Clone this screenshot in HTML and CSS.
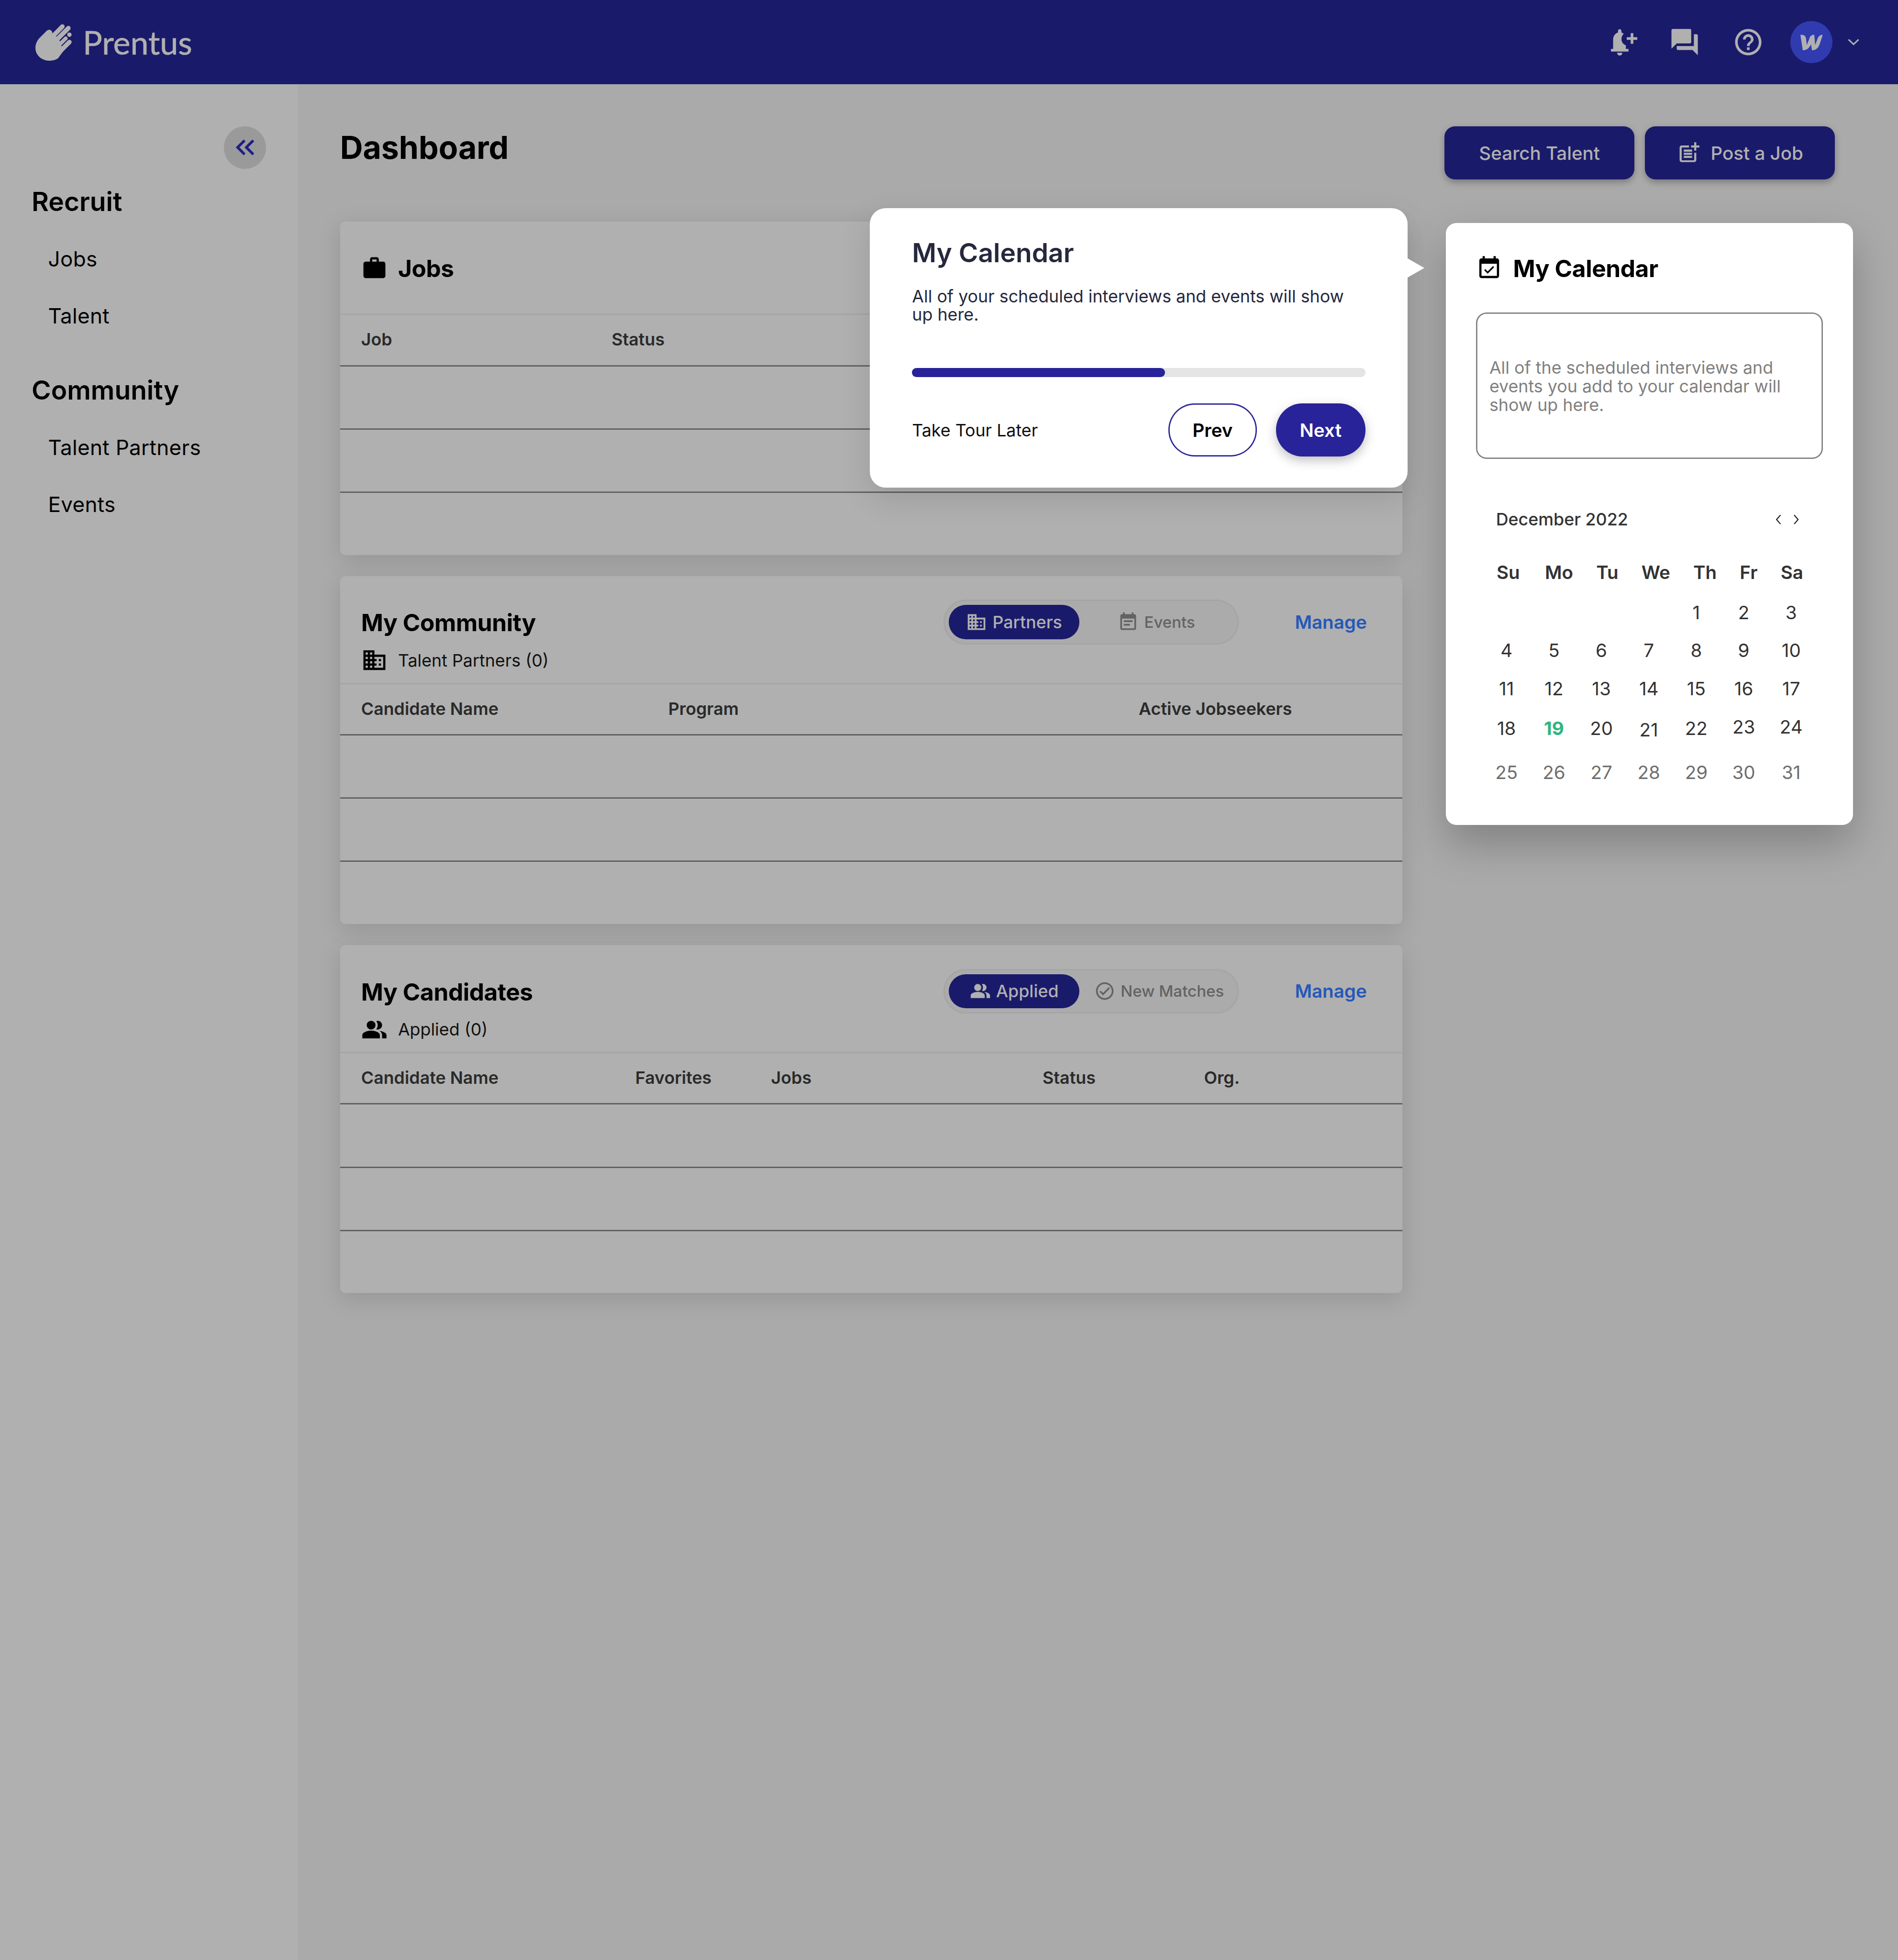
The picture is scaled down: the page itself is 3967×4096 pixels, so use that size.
FILE: index.html
```html
<!DOCTYPE html>
<html lang="en">
<head>
<meta charset="utf-8">
<title>Prentus Dashboard</title>
<link rel="stylesheet" href="styles.css">
</head>
<body>
<div class="app">
  <header class="topbar">
    <div class="logo">
      <svg class="logo-hand" viewBox="0 0 300 300"><path class="hand-palm" d="M130 278C75 278 33 240 33 190C33 165 42 145 58 125L108 75C118 65 133 63 142 73C150 82 150 92 148 100L176 112L200 143L213 183L240 190L187 262C170 273 150 278 130 278z"/><path class="hand-finger" d="M150 112L217 44M188 125L258 55"/><path class="hand-finger-s" d="M205 160L240 125"/><path class="hand-finger" d="M205 210L265 150"/><circle class="hand-palm" cx="265" cy="100" r="15"/></svg>
      <span class="logo-name">Prentus</span>
    </div>
    <div class="top-actions">
      <svg class="ico-bell" viewBox="0 0 24 24"><path d="M8 0c1 0 1.6.9 1.6 1.9v1.2c.8.2 1.5.6 2 1-1.3 1.4-2 3-2 4.9 0 3 2 5 4 5.6V18H16v2.4H0V18h2V9.6C2 6.4 3.8 3.9 6.4 3.1V1.9C6.4.9 7 0 8 0zM5.6 21.5h4.8c0 1.4-1 2.5-2.4 2.5s-2.4-1.1-2.4-2.5zM18 3.6h2.4v3.7H24v2.4h-3.6v3.6H18V9.700h-3.600V7.300H18z"/></svg>
      <svg class="ico-top" viewBox="0 0 24 24"><path d="M21 6h-2v9H6v2c0 .55.45 1 1 1h11l4 4V7c0-.55-.45-1-1-1zm-4 6V3c0-.55-.45-1-1-1H3c-.55 0-1 .45-1 1v14l4-4h10c.55 0 1-.45 1-1z"/></svg>
      <svg class="ico-top" viewBox="0 0 24 24"><path d="M11 18h2v-2h-2v2zm1-16C6.48 2 2 6.48 2 12s4.48 10 10 10 10-4.48 10-10S17.52 2 12 2zm0 18c-4.41 0-8-3.59-8-8s3.59-8 8-8 8 3.59 8 8-3.59 8-8 8zm0-14c-2.21 0-4 1.790-4 4h2c0-1.100.9-2 2-2s2 .9 2 2c0 2-3 1.750-3 5h2c0-2.250 3-2.500 3-5 0-2.210-1.790-4-4-4z"/></svg>
      <div class="avatar"><svg viewBox="0 0 17 12"><path d="M0 .3C2.500.1 3.900.9 4.200 2.900L4.900 8L7 2.600C7.600 1 8.800.2 10.500.2L11.200 8L12.900 3.600C13.700 1.500 15 .3 17 .2L14.600 7.400C13.500 10.400 11.600 12 8.800 12L8.100 7.600L6.600 9.800C5.400 11.200 3.900 12 1.800 12z"/></svg></div>
      <svg class="caret" viewBox="0 0 9 5"><path d="M.6.6L4.400 4.200L8.200.6"/></svg>
    </div>
  </header>

  <div class="layout">
    <aside class="sidebar">
      <div class="collapse-row">
        <button class="collapse"><svg viewBox="0 0 24 24"><path d="M17.590 18 19 16.590 14.420 12 19 7.410 17.590 6l-6 6zM11 18l1.410-1.410L7.830 12l4.580-4.590L11 6l-6 6z"/></svg></button>
      </div>
      <h2 class="nav-title nav-first">Recruit</h2>
      <nav class="nav-list">
        <a class="nav-item">Jobs</a>
        <a class="nav-item">Talent</a>
      </nav>
      <h2 class="nav-title nav-second">Community</h2>
      <nav class="nav-list">
        <a class="nav-item">Talent Partners</a>
        <a class="nav-item">Events</a>
      </nav>
    </aside>

    <main class="main">
      <div class="title-row">
        <h1 class="page-title">Dashboard</h1>
        <div class="title-actions">
          <button class="btn">Search Talent</button>
          <button class="btn"><svg class="btn-ico" viewBox="0 0 24 24"><path d="M17 19.220H5V7h7V5H5c-1.100 0-2 .9-2 2v12c0 1.100.9 2 2 2h12c1.100 0 2-.9 2-2v-7h-2v7.220zM19 2h-2v3h-3c.01.01 0 2 0 2h3v2.990c.01.01 2 0 2 0V7h3V5h-3V2zM7 9h8v2H7zm0 3v2h8v-2h-3zm0 3h8v2H7z"/></svg>Post a Job</button>
        </div>
      </div>

      <div class="content">
        <div class="cards">
          <section class="card">
            <div class="card-head card-head-single">
              <svg class="ico20" viewBox="0 0 24 24"><path d="M20 6h-4V4c0-1.110-.89-2-2-2h-4c-1.110 0-2 .89-2 2v2H4c-1.110 0-1.990.89-1.990 2L2 19c0 1.110.89 2 2 2h16c1.110 0 2-.89 2-2V8c0-1.110-.89-2-2-2zm-6 0h-4V4h4v2z"/></svg>
              <h3 class="card-title">Jobs</h3>
            </div>
            <div class="thead thead-jobs"><span>Job</span><span>Status</span></div>
            <div class="row"></div><div class="row"></div><div class="row row-last"></div>
          </section>

          <section class="card">
            <div class="card-head">
              <div class="head-top">
                <h3 class="card-title grow">My Community</h3>
                <div class="pill">
                  <span class="seg seg-on"><svg class="ico16" viewBox="0 0 24 24"><path d="M12 7V3H2v18h20V7H12zM6 19H4v-2h2v2zm0-4H4v-2h2v2zm0-4H4V9h2v2zm0-4H4V5h2v2zm4 12H8v-2h2v2zm0-4H8v-2h2v2zm0-4H8V9h2v2zm0-4H8V5h2v2zm10 12h-8v-2h2v-2h-2v-2h2v-2h-2V9h8v10zm-2-8h-2v2h2v-2zm0 4h-2v2h2v-2z"/></svg>Partners</span>
                  <span class="seg"><svg class="ico16" viewBox="0 0 24 24"><path d="M17 10H7v2h10v-2zm2-7h-1V1h-2v2H8V1H6v2H5c-1.110 0-1.990.9-1.990 2L3 19c0 1.100.89 2 2 2h14c1.100 0 2-.9 2-2V5c0-1.100-.9-2-2-2zm0 16H5V8h14v11zm-5-5H7v2h7v-2z"/></svg>Events</span>
                </div>
                <a class="manage">Manage</a>
              </div>
              <div class="head-sub"><svg class="ico20" viewBox="0 0 24 24"><path d="M12 7V3H2v18h20V7H12zM6 19H4v-2h2v2zm0-4H4v-2h2v2zm0-4H4V9h2v2zm0-4H4V5h2v2zm4 12H8v-2h2v2zm0-4H8v-2h2v2zm0-4H8V9h2v2zm0-4H8V5h2v2zm10 12h-8v-2h2v-2h-2v-2h2v-2h-2V9h8v10zm-2-8h-2v2h2v-2zm0 4h-2v2h2v-2z"/></svg>Talent Partners (0)</div>
            </div>
            <div class="thead thead-community"><span>Candidate Name</span><span>Program</span><span>Active Jobseekers</span></div>
            <div class="row"></div><div class="row"></div><div class="row row-last"></div>
          </section>

          <section class="card">
            <div class="card-head">
              <div class="head-top">
                <h3 class="card-title grow">My Candidates</h3>
                <div class="pill">
                  <span class="seg seg-on"><svg class="ico16" viewBox="0 0 24 24"><path d="M16.670 13.130C18.040 14.060 19 15.320 19 17v3h4v-3c0-2.180-3.570-3.470-6.330-3.870z"/><circle cx="9" cy="8" r="4"/><path d="M15 12c2.210 0 4-1.790 4-4s-1.790-4-4-4c-.47 0-.91.1-1.330.24C14.500 5.270 15 6.580 15 8s-.5 2.730-1.330 3.760c.42.14.86.24 1.330.24zM9 13c-2.670 0-8 1.340-8 4v3h16v-3c0-2.660-5.330-4-8-4z"/></svg>Applied</span>
                  <span class="seg seg-shift"><svg class="ico16" viewBox="0 0 24 24"><path d="M12 2C6.480 2 2 6.480 2 12s4.480 10 10 10 10-4.480 10-10S17.520 2 12 2zm0 18c-4.410 0-8-3.590-8-8s3.590-8 8-8 8 3.590 8 8-3.590 8-8 8zm4.590-12.420L10 14.170l-2.590-2.580L6 13l4 4 8-8z"/></svg>New Matches</span>
                </div>
                <a class="manage">Manage</a>
              </div>
              <div class="head-sub"><svg class="ico20" viewBox="0 0 24 24"><path d="M16.670 13.130C18.040 14.060 19 15.320 19 17v3h4v-3c0-2.180-3.570-3.470-6.330-3.870z"/><circle cx="9" cy="8" r="4"/><path d="M15 12c2.210 0 4-1.790 4-4s-1.790-4-4-4c-.47 0-.91.1-1.330.24C14.500 5.270 15 6.580 15 8s-.5 2.730-1.330 3.760c.42.14.86.24 1.330.24zM9 13c-2.670 0-8 1.340-8 4v3h16v-3c0-2.660-5.330-4-8-4z"/></svg>Applied (0)</div>
            </div>
            <div class="thead thead-candidates"><span>Candidate Name</span><span>Favorites</span><span>Jobs</span><span>Status</span><span>Org.</span></div>
            <div class="row"></div><div class="row"></div><div class="row row-last"></div>
          </section>
        </div>

        <section class="calendar">
          <div class="cal-head">
            <svg class="ico20" viewBox="0 0 24 24"><path d="M16.530 11.060L15.470 10l-4.880 4.880-2.120-2.120-1.060 1.060L10.590 17l5.940-5.940zM19 3h-1V1h-2v2H8V1H6v2H5c-1.110 0-1.990.9-1.990 2L3 19c0 1.100.89 2 2 2h14c1.100 0 2-.9 2-2V5c0-1.100-.9-2-2-2zm0 16H5V8h14v11z"/></svg>
            <h3 class="card-title">My Calendar</h3>
          </div>
          <div class="cal-empty"><p>All of the scheduled interviews and events you add to your calendar will show up here.</p></div>
          <div class="cal-month">
            <span>December 2022</span>
            <span class="cal-nav">
              <svg viewBox="0 0 5 9"><path d="M4.200.7L.9 4.500L4.200 8.300"/></svg>
              <svg viewBox="0 0 5 9"><path d="M.8.7L4.100 4.500L.8 8.300"/></svg>
            </span>
          </div>
          <div class="cal-week"><span>Su</span><span class="cal-mo">Mo</span><span>Tu</span><span>We</span><span>Th</span><span>Fr</span><span>Sa</span></div>
          <div class="cal-grid">
            <span></span><span></span><span></span><span></span><span>1</span><span>2</span><span>3</span>
            <span>4</span><span>5</span><span>6</span><span>7</span><span>8</span><span>9</span><span>10</span>
            <span>11</span><span>12</span><span>13</span><span>14</span><span>15</span><span>16</span><span>17</span>
            <span>18</span><span class="today">19</span><span>20</span><span class="low">21</span><span>22</span><span class="high">23</span><span class="high">24</span>
            <span class="next">25</span><span class="next">26</span><span class="next">27</span><span class="next">28</span><span class="next">29</span><span class="next">30</span><span class="next">31</span>
          </div>
        </section>

        <aside class="tour">
          <h4 class="tour-title">My Calendar</h4>
          <p class="tour-text">All of your scheduled interviews and events will show up here.</p>
          <div class="progress"><div class="progress-fill"></div></div>
          <div class="tour-foot">
            <span class="tour-later">Take Tour Later</span>
            <div class="tour-btns">
              <button class="tour-btn tour-prev">Prev</button>
              <button class="tour-btn tour-next">Next</button>
            </div>
          </div>
        </aside>
      </div>
    </main>
  </div>
</div>
</body>
</html>
```

FILE: styles.css
```css
html, body { margin: 0; padding: 0; background: #aaaaaa; overflow: hidden; }
body { font-family: "Inter", "Liberation Sans", sans-serif; color: #000; }
h1, h2, h3, h4, p { margin: 0; }
button { font-family: inherit; border: 0; padding: 0; cursor: pointer; }
svg { display: block; flex: none; }

.app { zoom: 2.7548; width: 1440px; height: 1486.800px; display: flex; flex-direction: column; background: #aaaaaa; }

/* top bar */
.topbar { height: 64px; flex: none; background: #1a1a6b; display: flex; align-items: center; justify-content: space-between; padding: 0 29px 0 23.300px; }
.logo { display: flex; align-items: center; gap: 6.200px; }
.logo-hand { width: 33.300px; height: 33.300px; }
.hand-palm { fill: #b0b0b0; }
.hand-finger { fill: none; stroke: #b0b0b0; stroke-width: 31; stroke-linecap: round; }
.hand-finger-s { fill: none; stroke: #b0b0b0; stroke-width: 26; stroke-linecap: round; }
.logo-name { font-family: "Lato", sans-serif; font-size: 24.700px; font-weight: 400; color: #b0b0b0; line-height: 32px; -webkit-text-stroke: 0.25px #b0b0b0; }
.top-actions { display: flex; align-items: center; }
.ico-bell { width: 20px; height: 20px; fill: #b0b0b0; margin-right: 24px; }
.ico-top { width: 24px; height: 24px; fill: #b0b0b0; margin-right: 24px; }
.ico-top + .avatar { margin-left: -4px; }
.avatar { width: 32px; height: 32px; border-radius: 50%; background: #303bb0; display: flex; align-items: center; justify-content: center; margin-right: 11.700px; }
.avatar svg { width: 17px; height: 12px; fill: #b0b0b0; }
.caret { width: 9px; height: 5px; fill: none; stroke: #b0b0b0; stroke-width: 1.100; }

.layout { flex: 1; display: flex; }

/* sidebar */
.sidebar { width: 226px; flex: none; background: #b0b0b0; padding-top: 32px; box-sizing: border-box; }
.collapse-row { display: flex; justify-content: flex-end; padding-right: 24px; }
.collapse { width: 32px; height: 32px; border-radius: 50%; background: #9a9a9a; display: flex; align-items: center; justify-content: center; }
.collapse svg { width: 24px; height: 24px; fill: #1f1d85; }
.nav-title { font-size: 20px; line-height: 24px; font-weight: 600; padding-left: 24px; }
.nav-first { margin-top: 13px; }
.nav-second { margin-top: 32.500px; }
.nav-list { display: flex; flex-direction: column; gap: 19px; margin-top: 19.500px; padding-left: 36.500px; }
.nav-item { font-size: 16px; line-height: 24px; color: #000; letter-spacing: 0.1px; }

/* main */
.main { flex: 1; padding: 32px 34px 0 32px; }
.title-row { display: flex; justify-content: space-between; align-items: flex-start; margin: 0 14px 32px 0; }
.page-title { font-size: 24px; line-height: 32px; font-weight: 700; }
.title-actions { display: flex; gap: 8px; }
.btn { width: 144px; height: 40px; border-radius: 8px; background: #1a1a6b; color: #b0b0b0; font-size: 14px; font-weight: 500; display: flex; align-items: center; justify-content: center; gap: 7px; box-shadow: 0 2px 5px rgba(0, 0, 0, 0.28); }
.btn-ico { width: 19px; height: 19px; fill: #b0b0b0; }

.content { position: relative; display: flex; gap: 33px; align-items: flex-start; }
.cards { width: 806px; flex: none; display: flex; flex-direction: column; gap: 16px; }

.card { background: #b0b0b0; border-radius: 4px; box-shadow: 0 4px 18px rgba(0, 0, 0, 0.13); }
.card-head { height: 82px; box-sizing: border-box; box-shadow: inset 0 -1px 0 #a5a5a5; padding: 0 27px 0 16px; }
.card-head-single { height: 71px; display: flex; align-items: center; gap: 8px; }
.head-top { display: flex; align-items: center; padding-top: 18px; }
.grow { flex: 1; padding-top: 1px; }
.card-title { font-size: 18px; line-height: 24px; font-weight: 700; letter-spacing: -0.15px; }
.ico20 { width: 20px; height: 20px; fill: #000; }
.ico16 { width: 16px; height: 16px; fill: currentColor; }
.head-sub { display: flex; align-items: center; gap: 8px; height: 20px; margin-top: 2px; font-size: 13px; color: #111; }

.pill { width: 224px; height: 34px; box-sizing: border-box; box-shadow: inset 0 0 0 1px #a5a5a5; border-radius: 17px; background: #ababab; padding: 4px; display: flex; }
.seg { flex: 1; display: flex; align-items: center; justify-content: center; gap: 4px; font-size: 12px; font-weight: 500; color: #636363; white-space: nowrap; }
.seg-on { flex: none; width: 99px; height: 26px; border-radius: 13px; background: #1a1a6b; color: #b0b0b0; font-size: 13px; }
.seg-shift { padding-left: 4px; }
.manage { margin-left: 42.500px; font-size: 14px; font-weight: 600; color: #2558b8; }

.thead { height: 39px; box-sizing: border-box; box-shadow: inset 0 -1px 0 #5c5c5c; padding: 0 0 2px 16px; display: grid; align-items: center; font-size: 13px; font-weight: 600; color: #2a2a2a; }
.thead-jobs { grid-template-columns: 190px 1fr; }
.thead-community { grid-template-columns: 233px 357px 1fr; }
.thead-candidates { grid-template-columns: 208px 103px 206px 122.500px 1fr; }
.row { height: 48px; box-sizing: border-box; box-shadow: inset 0 -1px 0 #5c5c5c; }
.row-last { height: 47px; box-shadow: none; }

/* calendar */
.calendar { width: 309px; flex: none; margin-top: 1px; box-sizing: border-box; background: #fff; border-radius: 8px; padding: 24.500px 23px 21.700px 23px; box-shadow: 0 14px 32px rgba(0, 0, 0, 0.24); position: relative; }
.cal-head { display: flex; align-items: center; gap: 8px; height: 20px; }
.cal-empty { margin-top: 23.500px; height: 111px; box-sizing: border-box; box-shadow: inset 0 0 0 1px #808080; border-radius: 8px; padding: 1.500px 10px 0; display: flex; align-items: center; }
.cal-empty p { font-size: 13px; line-height: 14.200px; color: #808080; }
.cal-month { display: flex; justify-content: space-between; align-items: center; height: 20px; margin-top: 36px; padding: 0 18px 0 15px; font-size: 13px; font-weight: 500; color: #333; }
.cal-nav { display: flex; gap: 9px; }
.cal-nav svg { width: 4.500px; height: 8.500px; fill: none; stroke: #222; stroke-width: 0.900; }
.cal-week { display: flex; gap: 17.500px; height: 20px; align-items: center; margin-top: 20px; padding-left: 15.500px; font-size: 14px; font-weight: 600; color: #333; }
.cal-mo { margin-left: 1.500px; }
.cal-grid { display: grid; grid-template-columns: repeat(7, 36px); grid-template-rows: 29px 29px 29px 31px 36px; margin: 6px 0 0 5px; font-size: 14px; color: #333; }
.cal-grid span { display: flex; align-items: center; justify-content: center; box-sizing: border-box; }
.cal-grid .today { color: #2db67d; font-weight: 700; }
.cal-grid .low { padding-top: 2px; }
.cal-grid .high { padding-bottom: 2px; }
.cal-grid .next { color: #6e6e6e; }

/* tour popover */
.tour { position: absolute; left: 402px; top: -10px; width: 408px; height: 212px; box-sizing: border-box; background: #fff; border-radius: 12px; padding: 20px 32px 0; box-shadow: 0 8px 24px rgba(0, 0, 0, 0.12); color: #25283d; z-index: 2; }
.tour::after { content: ""; position: absolute; left: 100%; top: 38px; border-style: solid; border-width: 7.500px 0 7.500px 13px; border-color: transparent transparent transparent #fff; }
.tour-title { font-size: 20px; line-height: 28px; font-weight: 600; }
.tour-text { margin-top: 11.700px; font-size: 13px; line-height: 14px; }
.progress { margin-top: 33.500px; height: 7px; border-radius: 4px; background: #e4e4e4; }
.progress-fill { width: 55.800%; height: 7px; border-radius: 4px; background: #282398; }
.tour-foot { margin-top: 20px; display: flex; justify-content: space-between; align-items: center; }
.tour-later { font-size: 13px; color: #111; }
.tour-btns { display: flex; gap: 14.500px; }
.tour-btn { height: 40px; border-radius: 20px; font-size: 14px; font-weight: 600; }
.tour-prev { width: 67px; background: #fff; box-shadow: inset 0 0 0 1px #282398; color: #000; }
.tour-next { width: 68px; background: #282398; color: #fff; box-shadow: 0 3px 8px rgba(0, 0, 0, 0.25); }
```
